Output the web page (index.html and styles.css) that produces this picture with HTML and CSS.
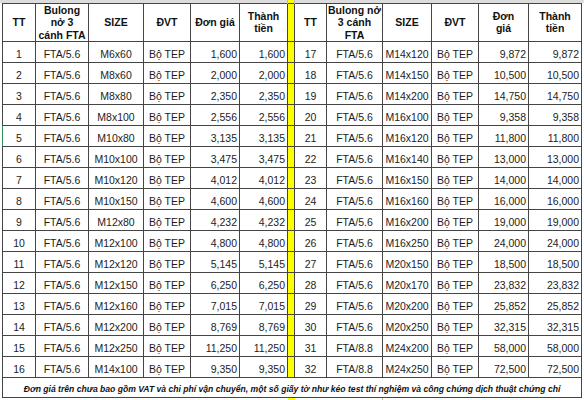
FILE: index.html
```html
<!DOCTYPE html>
<html lang="vi">
<head>
<meta charset="utf-8">
<title>Bảng giá bulong nở 3 cánh FTA</title>
<link rel="stylesheet" href="styles.css">
</head>
<body>
<table class="sheet">
  <colgroup>
    <col class="c-tt-l"><col class="c-bl-l"><col class="c-sz-l"><col class="c-dvt-l"><col class="c-dg-l"><col class="c-tt2-l">
    <col class="c-y">
    <col class="c-tt-r"><col class="c-bl-r"><col class="c-sz-r"><col class="c-dvt-r"><col class="c-dg-r"><col class="c-tt2-r">
  </colgroup>
  <tr class="pre"><td></td><td></td><td></td><td></td><td></td><td></td><td class="y"></td><td></td><td></td><td></td><td></td><td></td><td></td></tr>
  <tr class="head">
    <th>TT</th><th>Bulong<br>nở 3<br>cánh FTA</th><th>SIZE</th><th>ĐVT</th><th>Đơn giá</th><th>Thành<br>tiền</th>
    <td class="y"></td>
    <th>TT</th><th class="dash">Bulong nở<br>3 cánh<br>FTA</th><th>SIZE</th><th>ĐVT</th><th>Đơn<br>giá</th><th>Thành<br>tiền</th>
  </tr>
  <tr><td>1</td><td>FTA/5.6</td><td>M6x60</td><td>Bộ TEP</td><td class="n">1,600</td><td class="n">1,600</td><td class="y"></td><td>17</td><td class="dash">FTA/5.6</td><td>M14x120</td><td>Bộ TEP</td><td class="n">9,872</td><td class="n">9,872</td></tr>
  <tr><td>2</td><td>FTA/5.6</td><td>M8x60</td><td>Bộ TEP</td><td class="n">2,000</td><td class="n">2,000</td><td class="y"></td><td>18</td><td class="dash">FTA/5.6</td><td>M14x150</td><td>Bộ TEP</td><td class="n">10,500</td><td class="n">10,500</td></tr>
  <tr><td>3</td><td>FTA/5.6</td><td>M8x80</td><td>Bộ TEP</td><td class="n">2,350</td><td class="n">2,350</td><td class="y"></td><td>19</td><td class="dash">FTA/5.6</td><td>M14x200</td><td>Bộ TEP</td><td class="n">14,750</td><td class="n">14,750</td></tr>
  <tr><td>4</td><td>FTA/5.6</td><td>M8x100</td><td>Bộ TEP</td><td class="n">2,556</td><td class="n">2,556</td><td class="y"></td><td>20</td><td class="dash">FTA/5.6</td><td>M16x100</td><td>Bộ TEP</td><td class="n">9,358</td><td class="n">9,358</td></tr>
  <tr><td class="sel">5</td><td>FTA/5.6</td><td>M10x80</td><td>Bộ TEP</td><td class="n">3,135</td><td class="n">3,135</td><td class="y"></td><td>21</td><td class="dash">FTA/5.6</td><td>M16x120</td><td>Bộ TEP</td><td class="n">11,800</td><td class="n">11,800</td></tr>
  <tr><td>6</td><td>FTA/5.6</td><td>M10x100</td><td>Bộ TEP</td><td class="n">3,475</td><td class="n">3,475</td><td class="y"></td><td>22</td><td class="dash">FTA/5.6</td><td>M16x140</td><td>Bộ TEP</td><td class="n">13,000</td><td class="n">13,000</td></tr>
  <tr><td>7</td><td>FTA/5.6</td><td>M10x120</td><td>Bộ TEP</td><td class="n">4,012</td><td class="n">4,012</td><td class="y"></td><td>23</td><td class="dash">FTA/5.6</td><td>M16x150</td><td>Bộ TEP</td><td class="n">14,000</td><td class="n">14,000</td></tr>
  <tr><td>8</td><td>FTA/5.6</td><td>M10x150</td><td>Bộ TEP</td><td class="n">4,600</td><td class="n">4,600</td><td class="y"></td><td>24</td><td class="dash">FTA/5.6</td><td>M16x160</td><td>Bộ TEP</td><td class="n">16,000</td><td class="n">16,000</td></tr>
  <tr><td>9</td><td>FTA/5.6</td><td>M12x80</td><td>Bộ TEP</td><td class="n">4,232</td><td class="n">4,232</td><td class="y"></td><td>25</td><td class="dash">FTA/5.6</td><td>M16x200</td><td>Bộ TEP</td><td class="n">19,000</td><td class="n">19,000</td></tr>
  <tr><td>10</td><td>FTA/5.6</td><td>M12x100</td><td>Bộ TEP</td><td class="n">4,800</td><td class="n">4,800</td><td class="y"></td><td>26</td><td class="dash">FTA/5.6</td><td>M16x250</td><td>Bộ TEP</td><td class="n">24,000</td><td class="n">24,000</td></tr>
  <tr><td>11</td><td>FTA/5.6</td><td>M12x120</td><td>Bộ TEP</td><td class="n">5,145</td><td class="n">5,145</td><td class="y"></td><td>27</td><td class="dash">FTA/5.6</td><td>M20x150</td><td>Bộ TEP</td><td class="n">18,500</td><td class="n">18,500</td></tr>
  <tr><td>12</td><td>FTA/5.6</td><td>M12x150</td><td>Bộ TEP</td><td class="n">6,250</td><td class="n">6,250</td><td class="y"></td><td>28</td><td class="dash">FTA/5.6</td><td>M20x170</td><td>Bộ TEP</td><td class="n">23,832</td><td class="n">23,832</td></tr>
  <tr><td>13</td><td>FTA/5.6</td><td>M12x160</td><td>Bộ TEP</td><td class="n">7,015</td><td class="n">7,015</td><td class="y"></td><td>29</td><td class="dash">FTA/5.6</td><td>M20x200</td><td>Bộ TEP</td><td class="n">25,852</td><td class="n">25,852</td></tr>
  <tr><td>14</td><td>FTA/5.6</td><td>M12x200</td><td>Bộ TEP</td><td class="n">8,769</td><td class="n">8,769</td><td class="y"></td><td>30</td><td class="dash">FTA/5.6</td><td>M20x250</td><td>Bộ TEP</td><td class="n">32,315</td><td class="n">32,315</td></tr>
  <tr><td>15</td><td>FTA/5.6</td><td>M12x250</td><td>Bộ TEP</td><td class="n">11,250</td><td class="n">11,250</td><td class="y"></td><td>31</td><td class="dash">FTA/8.8</td><td>M24x200</td><td>Bộ TEP</td><td class="n">58,000</td><td class="n">58,000</td></tr>
  <tr><td>16</td><td>FTA/5.6</td><td>M14x100</td><td>Bộ TEP</td><td class="n">9,350</td><td class="n">9,350</td><td class="y"></td><td>32</td><td class="dash">FTA/8.8</td><td>M24x250</td><td>Bộ TEP</td><td class="n">72,500</td><td class="n">72,500</td></tr>
  <tr class="foot"><td colspan="13">Đơn giá trên chưa bao gồm VAT và chi phí vận chuyển, một số giấy tờ như kéo test thí nghiệm và công chứng dịch thuật chứng chỉ</td></tr>
  <tr class="post"><td></td><td></td><td></td><td></td><td></td><td></td><td class="y"></td><td></td><td></td><td class="dash"></td><td></td><td></td><td></td></tr>
</table>
</body>
</html>
```

FILE: styles.css
```css
html, body {
  margin: 0;
  padding: 0;
}

body {
  width: 584px;
  height: 400px;
  overflow: hidden;
  background: linear-gradient(#dcdcdc 0 3px, #ffffff 3px);
  font-family: "Liberation Sans", Arial, sans-serif;
  color: #1c1c1c;
}

.sheet {
  border-collapse: collapse;
  table-layout: fixed;
  margin-left: 2px;
  font-size: 10.5px;
}

.c-tt-l { width: 33px; }
.c-bl-l { width: 53px; }
.c-sz-l { width: 55px; }
.c-dvt-l { width: 47px; }
.c-dg-l { width: 49px; }
.c-tt2-l { width: 48px; }
.c-y { width: 7px; }
.c-tt-r { width: 32px; }
.c-bl-r { width: 56px; }
.c-sz-r { width: 49px; }
.c-dvt-r { width: 47px; }
.c-dg-r { width: 50px; }
.c-tt2-r { width: 53px; }

.sheet td,
.sheet th {
  border: 1px solid #454545;
  padding: 0;
  text-align: center;
  white-space: nowrap;
  overflow: hidden;
  line-height: 12px;
}

.sheet tr {
  height: 21px;
}

.sheet td {
  vertical-align: middle;
  padding-top: 3px;
}

.sheet td.n {
  text-align: right;
}

.sheet td.n::after {
  content: "";
  display: inline-block;
  width: 2px;
}

.sheet th {
  font-weight: bold;
  vertical-align: middle;
  line-height: 12.5px;
  color: #111;
}

.sheet .head {
  height: 38px;
}

.sheet td.y {
  background: #ffff00;
  padding: 0;
}

.sheet .dash {
  border-left: 1px dashed #8a8a8a;
}

.sheet td.sel {
  border-left: 1px solid #2f8f55;
}

.sheet .pre {
  height: 3px;
}

.sheet .pre td {
  border: none;
  padding: 0;
  line-height: 0;
}

.sheet .pre td.y {
  border-left: 1px solid #b8b8b8;
  border-right: 1px solid #b8b8b8;
}

.sheet .foot {
  height: 20px;
}

.sheet .foot td {
  font-weight: bold;
  font-style: italic;
  font-size: 8.6px;
  padding-top: 3px;
  color: #111;
}

.sheet .post {
  height: 2px;
}

.sheet .post td {
  border: none;
  padding: 0;
  line-height: 0;
}

.sheet .post td.dash {
  border-left: 1px dashed #bbbbbb;
}
```
